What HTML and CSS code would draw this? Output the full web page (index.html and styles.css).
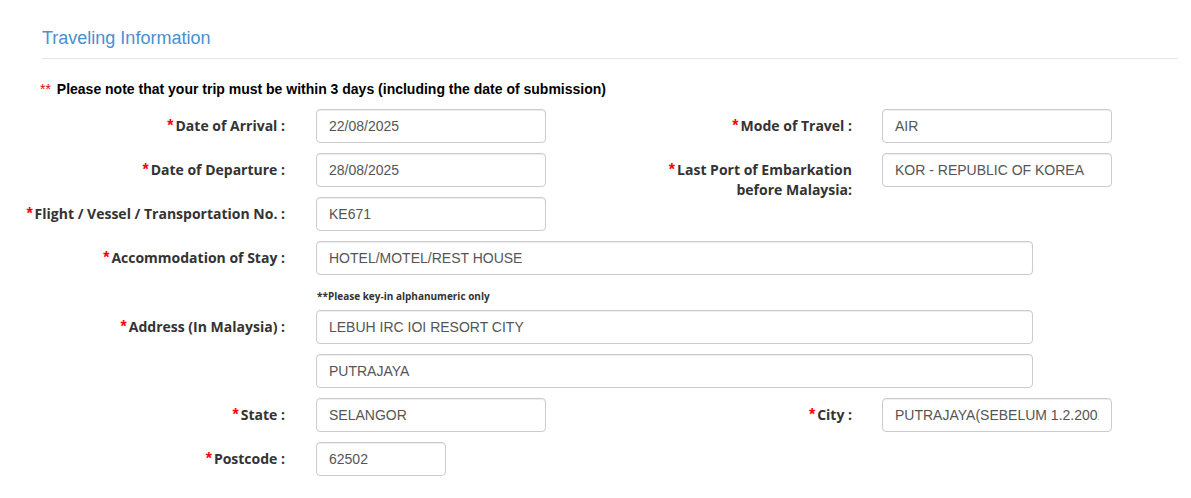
FILE: index.html
```html
<!DOCTYPE html>
<html lang="en">
<head>
<meta charset="utf-8">
<title>Traveling Information</title>
<link rel="stylesheet" href="styles.css">
</head>
<body>
<div class="section">
  <h3 class="section-title">Traveling Information</h3>
  <hr class="divider">
</div>
<p class="note"><span class="note-star">**</span> Please note that your trip must be within 3 days (including the date of submission)</p>
<form class="form">
  <div class="row">
    <label class="label"><span class="req">*</span>Date of Arrival :</label>
    <input class="input w-md" type="text" value="22/08/2025" readonly>
    <label class="label label-right"><span class="req">*</span>Mode of Travel :</label>
    <input class="input w-md" type="text" value="AIR" readonly>
  </div>
  <div class="row">
    <label class="label"><span class="req">*</span>Date of Departure :</label>
    <input class="input w-md" type="text" value="28/08/2025" readonly>
    <label class="label label-right"><span class="req">*</span>Last Port of Embarkation<br>before Malaysia:</label>
    <input class="input w-md" type="text" value="KOR - REPUBLIC OF KOREA" readonly>
  </div>
  <div class="row">
    <label class="label"><span class="req">*</span>Flight / Vessel / Transportation No. :</label>
    <input class="input w-md" type="text" value="KE671" readonly>
  </div>
  <div class="row">
    <label class="label"><span class="req">*</span>Accommodation of Stay :</label>
    <input class="input w-lg" type="text" value="HOTEL/MOTEL/REST HOUSE" readonly>
  </div>
  <div class="row row-help">
    <div class="label"></div>
    <div class="help">**Please key-in alphanumeric only</div>
  </div>
  <div class="row">
    <label class="label"><span class="req">*</span>Address (In Malaysia) :</label>
    <input class="input w-lg" type="text" value="LEBUH IRC IOI RESORT CITY" readonly>
  </div>
  <div class="row">
    <div class="label"></div>
    <input class="input w-lg" type="text" value="PUTRAJAYA" readonly>
  </div>
  <div class="row">
    <label class="label"><span class="req">*</span>State :</label>
    <input class="input w-md" type="text" value="SELANGOR" readonly>
    <label class="label label-right"><span class="req">*</span>City :</label>
    <input class="input w-md" type="text" value="PUTRAJAYA(SEBELUM 1.2.2001)" readonly>
  </div>
  <div class="row">
    <label class="label"><span class="req">*</span>Postcode :</label>
    <input class="input w-sm" type="text" value="62502" readonly>
  </div>
</form>
</body>
</html>
```

FILE: styles.css
```css
html, body {
  margin: 0;
  padding: 0;
  background: #fff;
}

body {
  font-family: "Liberation Sans", Arial, sans-serif;
  color: #333;
}

.section {
  padding: 0 13px 0 42px;
}

.section-title {
  margin: 0;
  padding-top: 25px;
  font-size: 18px;
  line-height: 26px;
  font-weight: normal;
  color: #4a8fd2;
}

.divider {
  margin: 7px 0 0 0;
  border: 0;
  border-top: 1px solid #e5e5e5;
  height: 0;
}

.note {
  margin: 20px 0 0 40px;
  font-size: 14px;
  line-height: 20px;
  font-weight: bold;
  color: #000;
}

.note-star {
  color: #e60000;
  font-weight: normal;
  margin-right: 2px;
}

.form {
  display: flex;
  flex-direction: column;
  gap: 10px;
  margin: 10px 0 0 0;
}

.row {
  display: flex;
  align-items: flex-start;
  height: 34px;
}

.row-help {
  height: 15px;
}

.label {
  box-sizing: border-box;
  width: 316px;
  height: 34px;
  padding: 7px 31px 0 0;
  text-align: right;
  font-family: "Open Sans", sans-serif;
  font-weight: bold;
  font-size: 14px;
  line-height: 20px;
  color: #333;
  white-space: nowrap;
}

.row-help .label {
  height: 15px;
}

.label-right {
  width: 336px;
  padding-right: 30px;
}

.req {
  color: #f00;
  font-family: "Liberation Sans", Arial, sans-serif;
  font-size: 16px;
  margin-right: 2px;
}

.input {
  box-sizing: border-box;
  height: 34px;
  margin: 0;
  padding: 6px 12px;
  border: 1px solid #ccc;
  border-radius: 4px;
  background: #fff;
  box-shadow: inset 0 1px 1px rgba(0, 0, 0, 0.075);
  font-family: "Liberation Sans", Arial, sans-serif;
  font-size: 14px;
  line-height: 20px;
  color: #555;
  outline: none;
}

.w-md { width: 230px; }
.w-lg { width: 717px; }
.w-sm { width: 130px; }

.help {
  padding-left: 1px;
  font-family: "Open Sans", sans-serif;
  font-weight: bold;
  font-size: 10px;
  line-height: 23px;
  height: 15px;
  color: #333;
}
```
